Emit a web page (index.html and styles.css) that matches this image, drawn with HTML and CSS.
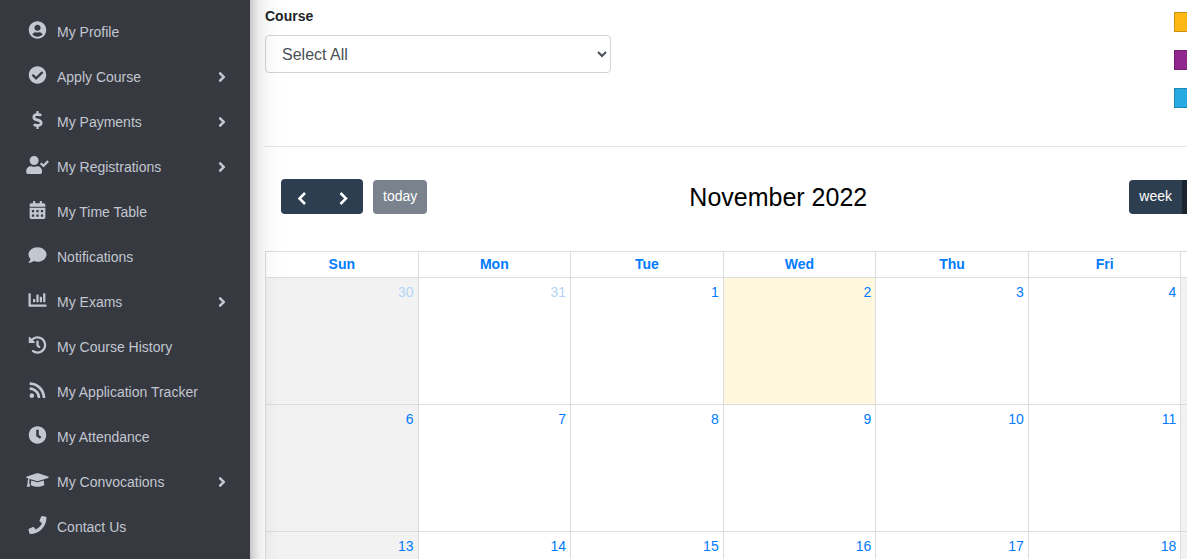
FILE: index.html
```
<!DOCTYPE html>
<html lang="en">
<head>
<meta charset="utf-8">
<title>My Time Table</title>
<link rel="stylesheet" href="styles.css">
</head>
<body>
<div class="wrapper">
  <aside class="sidebar">
    <nav class="menu">
      <a class="item" href="#"><svg class="icon" viewBox="0 0 496 512"><path d="M248 8C111 8 0 119 0 256s111 248 248 248 248-111 248-248S385 8 248 8zm0 96c48.600 0 88 39.400 88 88s-39.400 88-88 88-88-39.400-88-88 39.400-88 88-88zm0 344c-58.700 0-111.300-26.600-146.500-68.200 18.800-35.400 55.600-59.800 98.500-59.800 2.400 0 4.800.4 7.100 1.100 13 4.200 26.600 6.900 40.900 6.900s28-2.700 40.900-6.900c2.300-.7 4.700-1.100 7.100-1.100 42.900 0 79.700 24.400 98.500 59.800C359.300 421.400 306.700 448 248 448z"/></svg><span class="label">My Profile</span></a>
      <a class="item" href="#"><svg class="icon" viewBox="0 0 512 512"><path d="M504 256c0 136.967-111.033 248-248 248S8 392.967 8 256 119.033 8 256 8s248 111.033 248 248zM227.314 387.314l184-184c6.248-6.248 6.248-16.379 0-22.627l-22.627-22.627c-6.248-6.249-16.379-6.249-22.628 0L216 308.118l-70.059-70.059c-6.248-6.248-16.379-6.248-22.628 0l-22.627 22.627c-6.248 6.248-6.248 16.379 0 22.627l104 104c6.249 6.249 16.379 6.249 22.628.001z"/></svg><span class="label">Apply Course</span><svg class="arrow" viewBox="0 0 256 512"><path d="M224.300 273l-136 136c-9.400 9.400-24.600 9.400-33.900 0l-22.600-22.600c-9.400-9.400-9.400-24.600 0-33.900l96.400-96.400-96.400-96.400c-9.400-9.400-9.400-24.600 0-33.900L54.300 103c9.400-9.400 24.600-9.400 33.900 0l136 136c9.500 9.400 9.500 24.600.1 34z"/></svg></a>
      <a class="item" href="#"><svg class="icon" viewBox="0 0 288 512"><path d="M209.200 233.400l-108-31.600C88.700 198.200 80 186.500 80 173.500c0-16.300 13.200-29.500 29.500-29.500h66.300c12.200 0 24.200 3.700 34.200 10.500 6.100 4.100 14.300 3.100 19.500-2l34.800-34c7.100-6.900 6.100-18.400-1.800-24.500C238 74.800 207.400 64.100 176 64V16c0-8.800-7.200-16-16-16h-32c-8.800 0-16 7.200-16 16v48h-2.500C45.800 64-5.400 118.700.5 183.600c4.200 46.100 39.400 83.600 83.800 96.600l102.500 30c12.500 3.700 21.200 15.300 21.200 28.300 0 16.300-13.200 29.500-29.500 29.500h-66.300C100 368 88 364.300 78 357.500c-6.100-4.100-14.300-3.100-19.500 2l-34.800 34c-7.100 6.900-6.100 18.400 1.800 24.500 24.500 19.200 55.100 29.900 86.500 30v48c0 8.800 7.200 16 16 16h32c8.800 0 16-7.200 16-16v-48.200c46.600-.9 90.300-28.600 105.700-72.700 21.500-61.600-14.600-124.800-72.500-141.700z"/></svg><span class="label">My Payments</span><svg class="arrow" viewBox="0 0 256 512"><path d="M224.300 273l-136 136c-9.400 9.400-24.600 9.400-33.900 0l-22.600-22.600c-9.400-9.400-9.400-24.600 0-33.900l96.400-96.400-96.400-96.400c-9.400-9.400-9.400-24.600 0-33.900L54.300 103c9.400-9.400 24.600-9.400 33.900 0l136 136c9.500 9.400 9.500 24.600.1 34z"/></svg></a>
      <a class="item" href="#"><svg class="icon" viewBox="0 0 640 512"><path d="M224 256c70.700 0 128-57.300 128-128S294.700 0 224 0 96 57.300 96 128s57.300 128 128 128zm89.600 32h-16.700c-22.200 10.200-46.900 16-72.900 16s-50.600-5.800-72.900-16h-16.700C60.200 288 0 348.200 0 422.400V464c0 26.500 21.500 48 48 48h352c26.500 0 48-21.500 48-48v-41.600c0-74.200-60.200-134.400-134.400-134.400zM636.600 159.600l-27.800-28.200c-4.600-4.700-12.100-4.700-16.800-.1L487.100 235.400l-45.500-45.900c-4.600-4.700-12.100-4.700-16.800-.1l-28.100 27.900c-4.700 4.600-4.700 12.100-.1 16.800l81.700 82.300c4.600 4.700 12.100 4.700 16.800.1l141.300-140.200c4.600-4.600 4.700-12.100.2-16.700z"/></svg><span class="label">My Registrations</span><svg class="arrow" viewBox="0 0 256 512"><path d="M224.300 273l-136 136c-9.400 9.400-24.600 9.400-33.900 0l-22.600-22.600c-9.400-9.400-9.400-24.600 0-33.900l96.400-96.400-96.400-96.400c-9.400-9.400-9.400-24.600 0-33.900L54.300 103c9.400-9.400 24.600-9.400 33.900 0l136 136c9.500 9.400 9.500 24.600.1 34z"/></svg></a>
      <a class="item" href="#"><svg class="icon" viewBox="0 0 448 512"><path fill-rule="evenodd" d="M0 464c0 26.500 21.500 48 48 48h352c26.500 0 48-21.500 48-48V192H0v272zM64 256h64v64H64zM192 256h64v64h-64zM320 256h64v64h-64zM64 384h64v64H64zM192 384h64v64h-64zM320 384h64v64h-64zM400 64h-48V16c0-8.800-7.200-16-16-16h-32c-8.800 0-16 7.200-16 16v48H160V16c0-8.800-7.200-16-16-16h-32c-8.800 0-16 7.200-16 16v48H48C21.500 64 0 85.500 0 112v48h448v-48c0-26.500-21.500-48-48-48z"/></svg><span class="label">My Time Table</span></a>
      <a class="item" href="#"><svg class="icon" viewBox="0 0 512 512"><path d="M256 32C114.600 32 0 125.100 0 240c0 49.600 21.400 95 57 130.700C44.500 421.100 2.700 466 2.200 466.500c-2.200 2.300-2.800 5.700-1.500 8.700S4.800 480 8 480c66.300 0 116-31.800 140.600-51.400 32.700 12.300 69 19.400 107.400 19.400 141.400 0 256-93.100 256-208S397.400 32 256 32z"/></svg><span class="label">Notifications</span></a>
      <a class="item" href="#"><svg class="icon" viewBox="0 0 512 512"><path d="M332.800 320h38.400c6.400 0 12.800-6.400 12.800-12.800V172.800c0-6.400-6.400-12.800-12.800-12.800h-38.400c-6.400 0-12.800 6.400-12.800 12.800v134.400c0 6.400 6.400 12.800 12.800 12.800zm96 0h38.400c6.400 0 12.800-6.400 12.800-12.800V76.800c0-6.400-6.400-12.800-12.800-12.800h-38.400c-6.400 0-12.800 6.400-12.800 12.800v230.400c0 6.400 6.400 12.800 12.800 12.800zm-288 0h38.400c6.400 0 12.800-6.400 12.800-12.800v-70.400c0-6.400-6.400-12.800-12.800-12.800h-38.400c-6.400 0-12.800 6.400-12.800 12.800v70.400c0 6.400 6.400 12.800 12.800 12.800zm96 0h38.400c6.400 0 12.800-6.400 12.800-12.800V108.800c0-6.400-6.400-12.800-12.800-12.800h-38.400c-6.400 0-12.800 6.400-12.800 12.800v198.400c0 6.400 6.400 12.800 12.800 12.800zM496 384H64V80c0-8.800-7.200-16-16-16H16C7.200 64 0 71.200 0 80v336c0 17.700 14.300 32 32 32h464c8.800 0 16-7.200 16-16v-32c0-8.800-7.200-16-16-16z"/></svg><span class="label">My Exams</span><svg class="arrow" viewBox="0 0 256 512"><path d="M224.300 273l-136 136c-9.400 9.400-24.600 9.400-33.900 0l-22.600-22.600c-9.400-9.400-9.400-24.600 0-33.900l96.400-96.400-96.400-96.400c-9.400-9.400-9.400-24.600 0-33.900L54.300 103c9.400-9.400 24.600-9.400 33.900 0l136 136c9.500 9.400 9.500 24.600.1 34z"/></svg></a>
      <a class="item" href="#"><svg class="icon" viewBox="0 0 512 512"><path d="M504 255.500c.3 136.600-111.200 248.400-247.800 248.500-59 0-113.200-20.500-155.800-54.900-11.100-8.900-11.900-25.500-1.800-35.600l11.300-11.300c8.600-8.600 22.400-9.600 31.900-2C173.100 425.100 212.800 440 256 440c101.700 0 184-82.300 184-184 0-101.700-82.300-184-184-184-48.800 0-93.100 19-126.100 49.900l50.800 50.800c10.100 10.100 2.900 27.300-11.300 27.300H24c-8.800 0-16-7.200-16-16V38.600c0-14.300 17.200-21.400 27.300-11.300l49.400 49.400C129.200 34.100 189.600 8 256 8c136.800 0 247.700 110.800 248 247.500zm-180.900 78.800l9.800-12.600c8.100-10.500 6.300-25.500-4.200-33.700L288 256.300V152c0-13.300-10.700-24-24-24h-16c-13.300 0-24 10.700-24 24v135.700l65.400 50.900c10.500 8.100 25.500 6.300 33.700-4.300z"/></svg><span class="label">My Course History</span></a>
      <a class="item" href="#"><svg class="icon" viewBox="0 0 448 512"><path d="M128.100 416c0 35.400-28.700 64.100-64.100 64.100S0 451.400 0 416s28.700-64.100 64.100-64.100 64 28.700 64 64.100zm175.700 47.300C295.400 309.200 172.100 184.600 16.700 176.200 7.600 175.700 0 183.100 0 192.200v48.100c0 8.400 6.500 15.500 14.900 16 111.800 7.300 201.500 96.700 208.800 208.800.5 8.400 7.600 14.900 16 14.900h48.100c9.100 0 16.500-7.600 16-16.700zm144.200.3C439.600 229.700 251.500 40.400 16.500 32 7.500 31.700 0 39 0 48v48.100c0 8.600 6.800 15.600 15.500 16 191.200 7.800 344.600 161.300 352.500 352.500.4 8.600 7.400 15.500 16 15.500h48.100c9 0 16.300-7.500 15.900-16.500z"/></svg><span class="label">My Application Tracker</span></a>
      <a class="item" href="#"><svg class="icon" viewBox="0 0 512 512"><path d="M256 8C119 8 8 119 8 256s111 248 248 248 248-111 248-248S393 8 256 8zm57.100 350.100L224.900 294c-3.100-2.300-4.900-5.900-4.900-9.700V116c0-6.600 5.400-12 12-12h48c6.600 0 12 5.400 12 12v137.700l63.500 46.200c5.400 3.900 6.500 11.400 2.600 16.800l-28.200 38.800c-3.900 5.300-11.400 6.500-16.800 2.600z"/></svg><span class="label">My Attendance</span></a>
      <a class="item" href="#"><svg class="icon" viewBox="0 0 640 512"><path d="M622.300 153.200L343.400 67.500c-15.200-4.700-31.600-4.700-46.800 0L17.700 153.200c-23.600 7.300-23.600 38.300 0 45.600l48.600 14.900c-10.700 13.200-17.200 29.300-17.800 46.900C38.800 266.200 32 276.200 32 288c0 10.800 5.700 19.900 14 25.700L20.500 428.500C18.200 438.500 25.800 448 36.100 448h55.700c10.300 0 17.900-9.500 15.600-19.500L82 313.700c8.300-5.800 14-14.900 14-25.700 0-11.500-6.500-21.300-15.900-26.900.8-15 8.500-28.300 20.800-36.800l195.700 60.100c9.100 2.800 27.200 7 46.800 0l278.900-85.700c23.600-7.200 23.600-38.200 0-45.500zM352.800 315c-28.500 8.800-53.300 3.300-65.600 0l-145.100-44.600L128 384c0 35.300 86 64 192 64s192-28.700 192-64l-14.200-113.600z"/></svg><span class="label">My Convocations</span><svg class="arrow" viewBox="0 0 256 512"><path d="M224.300 273l-136 136c-9.400 9.400-24.600 9.400-33.900 0l-22.600-22.600c-9.400-9.400-9.400-24.600 0-33.900l96.400-96.400-96.400-96.400c-9.400-9.400-9.400-24.600 0-33.900L54.300 103c9.400-9.400 24.600-9.400 33.900 0l136 136c9.500 9.400 9.500 24.600.1 34z"/></svg></a>
      <a class="item" href="#"><svg class="icon" viewBox="0 0 512 512"><path d="M493.400 24.600l-104-24c-11.300-2.600-22.900 3.300-27.500 13.900l-48 112c-4.200 9.800-1.400 21.300 6.900 28l60.600 49.600c-36 76.700-98.900 140.500-177.200 177.200l-49.600-60.600c-6.800-8.300-18.200-11.100-28-6.900l-112 48C3.900 366.500-2 378.100.6 389.400l24 104C27.100 504.200 36.700 512 48 512c256.100 0 464-207.500 464-464 0-11.200-7.700-20.900-18.600-23.400z"/></svg><span class="label">Contact Us</span></a>
    </nav>
  </aside>

  <main class="content">
    <div class="page">
      <section class="filters">
        <div class="field">
          <label class="field-label" for="course">Course</label>
          <select class="select" id="course"><option>Select All</option></select>
        </div>
        <ul class="legend">
          <li class="swatch amber"></li>
          <li class="swatch purple"></li>
          <li class="swatch blue"></li>
        </ul>
      </section>

      <div class="toolbar">
        <div class="chunk">
          <div class="group">
            <button class="btn nav" type="button" aria-label="prev"><svg class="chevron" viewBox="0 0 20 20"><path d="M13 5L7.500 10.500 13 16"/></svg></button>
            <button class="btn nav" type="button" aria-label="next"><svg class="chevron" viewBox="0 0 20 20"><path d="M7.500 5l5.500 5.500L7.500 16"/></svg></button>
          </div>
          <button class="btn today-btn" type="button" disabled>today</button>
        </div>
        <h2 class="title">November 2022</h2>
        <div class="group">
          <button class="btn" type="button">week</button>
          <button class="btn active" type="button" aria-label="month"></button>
        </div>
      </div>

      <table class="calendar">
        <thead>
          <tr><th>Sun</th><th>Mon</th><th>Tue</th><th>Wed</th><th>Thu</th><th>Fri</th><th></th></tr>
        </thead>
        <tbody>
          <tr><td class="weekend other">30</td><td class="other">31</td><td>1</td><td class="today">2</td><td>3</td><td>4</td><td class="weekend"></td></tr>
          <tr><td class="weekend">6</td><td>7</td><td>8</td><td>9</td><td>10</td><td>11</td><td class="weekend"></td></tr>
          <tr><td class="weekend">13</td><td>14</td><td>15</td><td>16</td><td>17</td><td>18</td><td class="weekend"></td></tr>
        </tbody>
      </table>
    </div>
  </main>
</div>
</body>
</html>
```
FILE: styles.css
```
* { box-sizing: border-box; }

body {
  margin: 0;
  background: #fff;
  color: #212529;
  font-family: "Liberation Sans", Arial, sans-serif;
  font-size: 14px;
  line-height: 20px;
}

.wrapper {
  display: flex;
  height: 100vh;
  overflow: hidden;
}

/* Sidebar: starts above the window so its shadow is even at the top */
.sidebar {
  flex: 0 0 250px;
  z-index: 1;
  margin: -48px 0;
  padding-top: 57px;
  background: #363940;
  box-shadow: 0 14px 28px rgba(0, 0, 0, .25), 0 10px 10px rgba(0, 0, 0, .22);
}

.menu { display: flex; flex-direction: column; }

.item {
  display: flex;
  align-items: center;
  height: 45px;
  padding: 0 24px 0 26px;
  color: #c2c7d0;
  text-decoration: none;
}

.icon {
  width: 23px;
  height: 18px;
  margin-bottom: 3px;
  fill: currentColor;
}

.label { flex: 1; margin-left: 8px; }

.arrow { width: 8px; height: 16px; fill: currentColor; }

/* Main area */
.content { flex: 1; min-width: 0; padding-left: 15px; overflow: hidden; }

.page { min-width: 1069px; }

.filters {
  display: flex;
  justify-content: space-between;
  height: 147px;
  padding-top: 6px;
  border-bottom: 1px solid #e5e5e5;
}

.field { display: flex; flex-direction: column; gap: 9px; width: 346px; }

.field-label { font-weight: bold; }

.select {
  height: 38px;
  padding: 6px 12px;
  border: 1px solid #ced4da;
  border-radius: 4px;
  background: #fff;
  color: #495057;
  font: 16px "Liberation Sans", Arial, sans-serif;
}

.legend {
  display: flex;
  flex-direction: column;
  gap: 18px;
  width: 160px;
  margin: 0;
  padding: 6px 0 0;
  list-style: none;
}

.swatch { width: 20px; height: 20px; border: 1px solid; }
.amber { background: #fdb813; border-color: #c99210; }
.purple { background: #8f278f; border-color: #701f70; }
.blue { background: #27aae1; border-color: #1f87b3; }

.toolbar {
  display: flex;
  justify-content: space-between;
  align-items: center;
  height: 104px;
  padding: 0 16px 5px;
}

.chunk { display: flex; align-items: flex-end; gap: 10px; }

.group { display: flex; border-radius: 4px; overflow: hidden; }

.btn {
  height: 34px;
  padding: 0 10px 2px;
  border: 0;
  background: #2c3e50;
  color: #fff;
  font: 14px "Liberation Sans", Arial, sans-serif;
}

.nav {
  display: flex;
  align-items: center;
  justify-content: center;
  width: 41px;
  height: 35px;
  padding: 2px 0 0;
}

.chevron {
  width: 20px;
  height: 20px;
  fill: none;
  stroke: #fff;
  stroke-width: 2.5;
}

.today-btn { border-radius: 4px; background: #79828d; }

.active { width: 136px; background: #1a252f; }

.title {
  margin: 0;
  color: #000;
  font-size: 25px;
  font-weight: normal;
}

.calendar {
  width: 100%;
  table-layout: fixed;
  border-collapse: collapse;
  color: #007bff;
}

.calendar th {
  height: 26px;
  padding: 0 0 2px;
  border: 1px solid #ddd;
}

.calendar td {
  height: 127px;
  padding: 4px;
  border: 1px solid #ddd;
  text-align: right;
  vertical-align: top;
}

.calendar .weekend { background: #f2f2f2; }
.calendar .today { background: #fff8df; }
.calendar .other { color: #b6d4f5; }
```
